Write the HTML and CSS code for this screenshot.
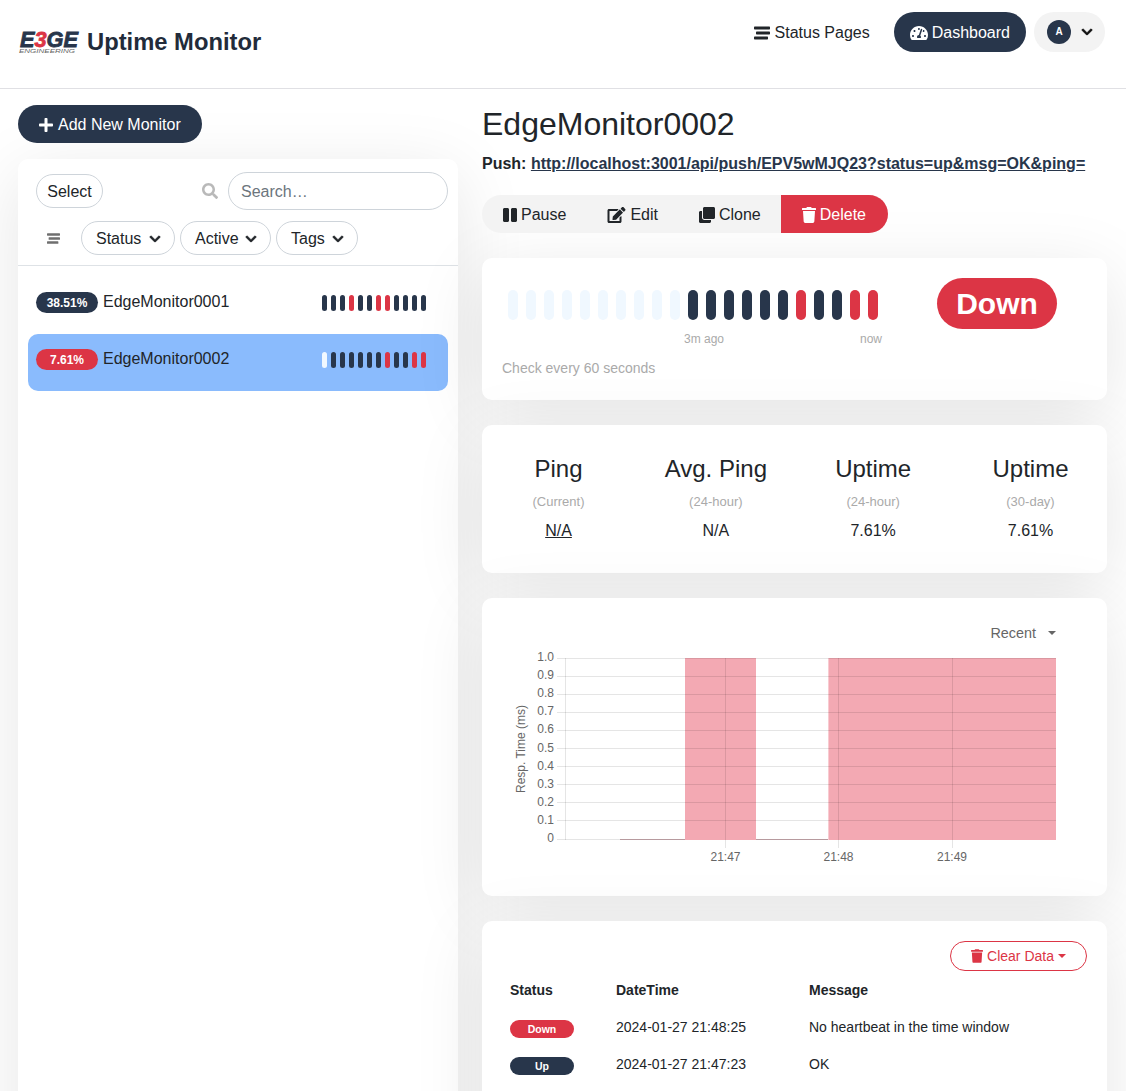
FILE: index.html
```html
<!DOCTYPE html>
<html>
  <head>
    <title>EdgeMonitor0002 - Uptime Monitor</title>
    <link rel="stylesheet" href="styles.css">
  </head>
  <body>
    <svg class="icon-defs">
      <symbol id="i-plus" viewBox="0 0 448 512"><path d="M416 208H272V64c0-17.67-14.33-32-32-32h-32c-17.67 0-32 14.33-32 32v144H32c-17.67 0-32 14.33-32 32v32c0 17.67 14.33 32 32 32h144v144c0 17.67 14.33 32 32 32h32c17.67 0 32-14.33 32-32V304h144c17.67 0 32-14.33 32-32v-32c0-17.67-14.33-32-32-32z"/></symbol>
      <symbol id="i-stream" viewBox="0 0 512 512"><rect x="0" y="48" width="512" height="96" rx="22"/><rect x="64" y="208" width="448" height="96" rx="22"/><rect x="0" y="368" width="448" height="96" rx="22"/></symbol>
      <symbol id="i-gauge" viewBox="0 0 576 512"><path d="M288 32C128.94 32 0 160.94 0 320c0 52.8 14.25 102.26 39.06 144.8 5.61 9.62 16.3 15.2 27.44 15.2h443c11.14 0 21.83-5.58 27.44-15.2C561.75 422.26 576 372.8 576 320c0-159.06-128.94-288-288-288zm0 64c14.71 0 26.58 10.13 30.32 23.65-1.11 2.26-2.64 4.23-3.45 6.67l-9.22 27.67c-5.13 3.49-10.97 6.01-17.64 6.01-17.67 0-32-14.33-32-32S270.33 96 288 96zM96 384c-17.67 0-32-14.33-32-32s14.33-32 32-32 32 14.33 32 32-14.33 32-32 32zm48-160c-17.67 0-32-14.33-32-32s14.33-32 32-32 32 14.33 32 32-14.33 32-32 32zm246.77-72.41l-61.33 184C343.13 347.33 352 364.54 352 384c0 11.72-3.38 22.55-8.88 32H232.88c-5.5-9.45-8.88-20.28-8.88-32 0-33.94 26.5-61.43 59.9-63.59l61.34-184.01c4.17-12.56 17.73-19.45 30.36-15.17 12.57 4.19 19.35 17.79 15.17 30.36zm14.66 57.2l15.52-46.55c3.47-1.29 7.13-2.23 11.05-2.23 17.67 0 32 14.33 32 32s-14.33 32-32 32c-11.38-.01-20.89-6.27-26.57-15.22zM480 384c-17.67 0-32-14.33-32-32s14.33-32 32-32 32 14.33 32 32-14.33 32-32 32z"/></symbol>
      <symbol id="i-chevron" viewBox="-20 0 488 512"><path d="M207.029 381.476L12.686 187.132c-9.373-9.373-9.373-24.569 0-33.941l22.667-22.667c9.357-9.357 24.522-9.375 33.901-.04L224 284.505l154.745-154.021c9.379-9.335 24.544-9.317 33.901.04l22.667 22.667c9.373 9.373 9.373 24.569 0 33.941L240.971 381.476c-9.373 9.372-24.569 9.372-33.942 0z"/></symbol>
      <symbol id="i-search" viewBox="0 0 512 512"><path d="M505 442.7L405.3 343c-4.5-4.5-10.6-7-17-7H372c27.6-35.3 44-79.7 44-128C416 93.1 322.9 0 208 0S0 93.1 0 208s93.1 208 208 208c48.3 0 92.7-16.4 128-44v16.3c0 6.4 2.5 12.5 7 17l99.7 99.7c9.4 9.4 24.6 9.4 33.9 0l28.3-28.3c9.4-9.4 9.4-24.6.1-34zM208 336c-70.7 0-128-57.2-128-128 0-70.7 57.2-128 128-128 70.7 0 128 57.2 128 128 0 70.7-57.2 128-128 128z"/></symbol>
      <symbol id="i-pause" viewBox="0 0 448 512"><path d="M144 479H48c-26.5 0-48-21.5-48-48V79c0-26.5 21.5-48 48-48h96c26.5 0 48 21.5 48 48v352c0 26.5-21.5 48-48 48zm304-48V79c0-26.5-21.5-48-48-48h-96c-26.5 0-48 21.5-48 48v352c0 26.5 21.5 48 48 48h96c26.5 0 48-21.5 48-48z"/></symbol>
      <symbol id="i-edit" viewBox="0 0 576 512"><path d="M402.6 83.2l90.2 90.2c3.8 3.8 3.8 10 0 13.8L274.4 405.6l-92.8 10.3c-12.4 1.4-22.9-9.1-21.5-21.5l10.3-92.8L388.8 83.2c3.8-3.8 10-3.8 13.8 0zm162-22.9l-48.8-48.8c-15.2-15.2-39.9-15.2-55.2 0l-35.4 35.4c-3.8 3.8-3.8 10 0 13.8l90.2 90.2c3.8 3.8 10 3.8 13.8 0l35.4-35.4c15.2-15.3 15.2-40 0-55.2zM384 346.2V448H64V128h229.8c3.2 0 6.2-1.3 8.5-3.5l40-40c7.6-7.6 2.2-20.5-8.5-20.5H48C21.5 64 0 85.5 0 112v352c0 26.5 21.5 48 48 48h352c26.5 0 48-21.5 48-48V306.2c0-10.7-12.9-16-20.5-8.5l-40 40c-2.2 2.3-3.5 5.3-3.5 8.5z"/></symbol>
      <symbol id="i-clone" viewBox="0 0 512 512"><path d="M464 0c26.51 0 48 21.49 48 48v288c0 26.51-21.49 48-48 48H176c-26.51 0-48-21.49-48-48V48c0-26.51 21.49-48 48-48h288M176 416c-44.112 0-80-35.888-80-80V128H48c-26.51 0-48 21.49-48 48v288c0 26.51 21.49 48 48 48h288c26.51 0 48-21.49 48-48v-48H176z"/></symbol>
      <symbol id="i-trash" viewBox="0 0 448 512"><path d="M432 32H312l-9.4-18.7A24 24 0 0 0 281.1 0H166.8a23.72 23.72 0 0 0-21.4 13.3L136 32H16A16 16 0 0 0 0 48v32a16 16 0 0 0 16 16h416a16 16 0 0 0 16-16V48a16 16 0 0 0-16-16zM53.2 467a48 48 0 0 0 47.9 45h245.8a48 48 0 0 0 47.9-45L416 128H32z"/></symbol>
    </svg>

    <div class="page">
      <header class="topbar">
        <div class="brand">
          <svg class="logo" viewBox="0 0 60 24">
            <text class="logo-word" x="1" y="17" textLength="58" lengthAdjust="spacingAndGlyphs">E<tspan class="logo-three">3</tspan>GE</text>
            <text class="logo-sub" x="0" y="23" textLength="56" lengthAdjust="spacingAndGlyphs">ENGINEERING</text>
          </svg>
          <span class="brand-name">Uptime Monitor</span>
        </div>
        <nav class="nav">
          <a class="nav-link"><svg class="icon i16"><use href="#i-stream"/></svg>Status Pages</a>
          <a class="nav-link active"><svg class="icon i18"><use href="#i-gauge"/></svg>Dashboard</a>
          <div class="profile">
            <span class="avatar">A</span>
            <svg class="icon i12 chevron"><use href="#i-chevron"/></svg>
          </div>
        </nav>
      </header>

      <main class="layout">
        <aside class="sidebar">
          <a class="add-btn"><svg class="icon i14"><use href="#i-plus"/></svg>Add New Monitor</a>
          <section class="card list-card">
            <div class="list-head">
              <div class="head-row">
                <button class="pill-btn select-btn">Select</button>
                <svg class="icon i16 search-icon"><use href="#i-search"/></svg>
                <input class="search" placeholder="Search…">
              </div>
              <div class="filter-row">
                <span class="filter-icon"><svg class="icon i13"><use href="#i-stream"/></svg></span>
                <button class="pill-btn filter f-status">Status<svg class="icon i12 chevron"><use href="#i-chevron"/></svg></button>
                <button class="pill-btn filter f-active">Active<svg class="icon i12 chevron"><use href="#i-chevron"/></svg></button>
                <button class="pill-btn filter f-tags">Tags<svg class="icon i12 chevron"><use href="#i-chevron"/></svg></button>
              </div>
            </div>
            <div class="list">
              <div class="item">
                <span class="uptime navy">38.51%</span>
                <span class="item-name">EdgeMonitor0001</span>
                <div class="mini-beats">
                  <i class="navy"></i><i class="navy"></i><i class="navy"></i><i class="red"></i><i class="navy"></i><i class="navy"></i><i class="red"></i><i class="red"></i><i class="navy"></i><i class="navy"></i><i class="navy"></i><i class="navy"></i>
                </div>
              </div>
              <div class="item selected">
                <span class="uptime red">7.61%</span>
                <span class="item-name">EdgeMonitor0002</span>
                <div class="mini-beats">
                  <i class="empty"></i><i class="navy"></i><i class="navy"></i><i class="navy"></i><i class="navy"></i><i class="navy"></i><i class="navy"></i><i class="red"></i><i class="navy"></i><i class="navy"></i><i class="red"></i><i class="red"></i>
                </div>
              </div>
            </div>
          </section>
        </aside>

        <div class="detail">
          <h1 class="title">EdgeMonitor0002</h1>
          <p class="push">Push: <a>http://localhost:3001/api/push/EPV5wMJQ23?status=up&amp;msg=OK&amp;ping=</a></p>

          <div class="actions">
            <a class="action"><svg class="icon i14"><use href="#i-pause"/></svg>Pause</a>
            <a class="action"><svg class="icon i19"><use href="#i-edit"/></svg>Edit</a>
            <a class="action"><svg class="icon i16"><use href="#i-clone"/></svg>Clone</a>
            <a class="action danger"><svg class="icon i14"><use href="#i-trash"/></svg>Delete</a>
          </div>

          <section class="card status-card">
            <div class="beat-col">
              <div class="beats">
                <i class="empty"></i><i class="empty"></i><i class="empty"></i><i class="empty"></i><i class="empty"></i><i class="empty"></i><i class="empty"></i><i class="empty"></i><i class="empty"></i><i class="empty"></i>
                <i class="navy"></i><i class="navy"></i><i class="navy"></i><i class="navy"></i><i class="navy"></i><i class="navy"></i><i class="red"></i><i class="navy"></i><i class="navy"></i><i class="red"></i><i class="red"></i>
              </div>
              <div class="beat-labels"><span>3m ago</span><span>now</span></div>
              <div class="check-text">Check every 60 seconds</div>
            </div>
            <div class="big-status">Down</div>
          </section>

          <section class="card stats-card">
            <div class="stat"><h4>Ping</h4><div class="stat-sub">(Current)</div><div class="stat-val"><u>N/A</u></div></div>
            <div class="stat"><h4>Avg. Ping</h4><div class="stat-sub">(24-hour)</div><div class="stat-val">N/A</div></div>
            <div class="stat"><h4>Uptime</h4><div class="stat-sub">(24-hour)</div><div class="stat-val">7.61%</div></div>
            <div class="stat"><h4>Uptime</h4><div class="stat-sub">(30-day)</div><div class="stat-val">7.61%</div></div>
          </section>

          <section class="card chart-card">
            <div class="range">Recent<span class="caret"></span></div>
            <svg class="chart" viewBox="482 648 625 220">
              <path class="down-area" d="M685 658H756V840H685ZM828.4 658H1056V840H828.4Z"/>
              <path class="down-line" d="M620 839.5H685M756 839.5H828"/>
              <g class="grid">
                <path d="M557 658.5H1056M557 676.5H1056M557 694.5H1056M557 712.5H1056M557 730.5H1056M557 748.5H1056M557 766.5H1056M557 784.5H1056M557 802.5H1056M557 820.5H1056M557 839.5H620"/>
                <path d="M565.5 658V840M725.5 658V848M838.5 658V848M952.5 658V848"/>
              </g>
              <g class="y-labels">
                <text x="554" y="661">1.0</text><text x="554" y="679">0.9</text><text x="554" y="697">0.8</text><text x="554" y="715">0.7</text><text x="554" y="733">0.6</text><text x="554" y="752">0.5</text><text x="554" y="770">0.4</text><text x="554" y="788">0.3</text><text x="554" y="806">0.2</text><text x="554" y="824">0.1</text><text x="554" y="842">0</text>
              </g>
              <g class="x-labels">
                <text x="725.5" y="861">21:47</text><text x="838.5" y="861">21:48</text><text x="952" y="861">21:49</text>
              </g>
              <text class="y-title" transform="translate(525 749) rotate(-90)">Resp. Time (ms)</text>
            </svg>
          </section>

          <section class="card table-card">
            <div class="table-tools">
              <button class="clear-btn"><svg class="icon i12-14"><use href="#i-trash"/></svg>Clear Data<span class="caret"></span></button>
            </div>
            <table class="events">
              <thead>
                <tr><th class="col-status">Status</th><th class="col-time">DateTime</th><th>Message</th></tr>
              </thead>
              <tbody>
                <tr><td><span class="state red">Down</span></td><td>2024-01-27 21:48:25</td><td>No heartbeat in the time window</td></tr>
                <tr><td><span class="state navy">Up</span></td><td>2024-01-27 21:47:23</td><td>OK</td></tr>
              </tbody>
            </table>
          </section>
        </div>
      </main>
    </div>
  </body>
</html>
```

FILE: styles.css
```css
* {
  box-sizing: border-box;
}

html, body {
  margin: 0;
  padding: 0;
  background-color: #fff;
}

body {
  font-family: "Liberation Sans", Arial, sans-serif;
  font-size: 16px;
  line-height: 24px;
  color: #212529;
}

.icon-defs {
  display: none;
}

.page {
  height: 1091px;
  overflow: hidden;
}

.icon {
  fill: currentColor;
  flex-shrink: 0;
  display: block;
}

.chevron {
  stroke: currentColor;
  stroke-width: 28;
}

.i12 { width: 12px; height: 12px; }
.i13 { width: 13px; height: 13px; }
.i14 { width: 14px; height: 16px; }
.i16 { width: 16px; height: 16px; }
.i18 { width: 18px; height: 16px; }
.i19 { width: 19px; height: 16px; }
.i12-14 { width: 12px; height: 14px; }

.navy { background-color: #28364b; }
.red { background-color: #dc3545; }
.empty { background-color: #f0f8ff; }

/* top bar */
.topbar {
  height: 89px;
  border-bottom: 1px solid #e0e0e4;
  display: flex;
  justify-content: space-between;
  padding: 12px 21px 0 19px;
}

.brand {
  display: flex;
  align-items: center;
  height: 60px;
}

.logo {
  display: block;
  width: 60px;
  height: 24px;
  margin-right: 8px;
  overflow: visible;
}

.logo-word {
  font-size: 22px;
  font-weight: bold;
  font-style: italic;
  fill: #28364b;
  stroke: #28364b;
  stroke-width: 0.8;
}

.logo-three {
  fill: #dc3545;
  stroke: #dc3545;
}

.logo-sub {
  font-size: 5.5px;
  font-style: italic;
  fill: #666;
}

.brand-name {
  font-size: 23.75px;
  font-weight: bold;
  color: #222b3a;
}

.nav {
  display: flex;
  align-items: flex-start;
}

.nav-link {
  display: flex;
  align-items: center;
  gap: 5px;
  height: 40px;
  padding-top: 1px;
  border-radius: 20px;
  color: #212529;
}

.nav-link.active {
  gap: 4px;
  margin-left: 24px;
  padding: 1px 16px 0;
  color: #fff;
  background-color: #28364b;
}

.profile {
  display: flex;
  align-items: center;
  gap: 10px;
  width: 71px;
  height: 40px;
  margin-left: 8px;
  padding-left: 13px;
  border-radius: 20px;
  background-color: #f3f3f3;
  color: #111;
}

.avatar {
  width: 24px;
  height: 24px;
  border-radius: 50%;
  background-color: #28364b;
  color: #fff;
  font-size: 10px;
  font-weight: bold;
  line-height: 24px;
  text-align: center;
}

/* columns */
.layout {
  display: flex;
  padding: 16px 19px 0 18px;
  gap: 24px;
}

.sidebar {
  width: 440px;
  flex-shrink: 0;
}

.detail {
  flex: 1;
  min-width: 0;
}

.card {
  background-color: #fff;
  border-radius: 10px;
  box-shadow: 0 15px 70px rgba(0, 0, 0, 0.1);
}

.add-btn {
  display: inline-flex;
  align-items: center;
  gap: 5px;
  height: 38px;
  padding: 1px 21px 0;
  border-radius: 19px;
  background-color: #28364b;
  color: #fff;
}

/* monitor list */
.list-card {
  margin-top: 16px;
  height: 1000px;
}

.list-head {
  padding-top: 13px;
  padding-bottom: 10px;
  border-bottom: 1px solid #dee2e6;
}

.head-row {
  display: flex;
  align-items: center;
  padding: 0 10px 0 18px;
}

.pill-btn {
  height: 34px;
  padding: 2px 11px 0;
  font: inherit;
  color: #212529;
  background-color: #fff;
  border: 1px solid #ced4da;
  border-radius: 17px;
}

.select-btn {
  width: 67px;
  padding-left: 0;
  padding-right: 0;
}

.search-icon {
  margin-left: auto;
  margin-right: 10px;
  color: #b9b9b9;
}

.search {
  width: 220px;
  height: 38px;
  padding: 2px 12px 0;
  font: inherit;
  border: 1px solid #ced4da;
  border-radius: 19px;
  outline: none;
}

.search::placeholder {
  color: #6c757d;
}

.filter-row {
  display: flex;
  align-items: center;
  gap: 5px;
  margin-top: 11px;
  padding-left: 18px;
}

.filter-icon {
  width: 40px;
  padding-left: 11px;
  color: #6f6f6f;
}

.filter {
  display: flex;
  align-items: center;
  justify-content: space-between;
  padding: 2px 13px 0 14px;
}

.f-status { width: 94px; }
.f-active { width: 91px; }
.f-tags { width: 82px; }

.list {
  padding: 11px 10px;
}

.item {
  display: flex;
  align-items: center;
  height: 57px;
  padding: 0 22px 6px 8px;
  border-radius: 10px;
}

.item.selected {
  background-color: #8abbfd;
}

.uptime {
  width: 62px;
  height: 21px;
  margin-right: 5px;
  border-radius: 11px;
  color: #fff;
  font-size: 12px;
  font-weight: bold;
  line-height: 22px;
  text-align: center;
}

.item-name {
  margin-bottom: 2px;
}

.mini-beats {
  display: flex;
  gap: 4px;
  margin-left: auto;
  margin-top: 1px;
}

.mini-beats i {
  width: 5px;
  height: 16px;
  border-radius: 2.5px;
}

/* detail head */
.title {
  margin: 0;
  font-size: 32px;
  font-weight: 400;
  line-height: 38px;
}

.push {
  margin: 9px 0 0;
  font-weight: bold;
  white-space: nowrap;
}

.push a {
  color: #28364b;
  text-decoration: underline;
}

.actions {
  display: inline-flex;
  height: 38px;
  margin-top: 19px;
  border-radius: 19px;
  background-color: #f3f3f3;
  overflow: hidden;
  vertical-align: top;
}

.action {
  display: flex;
  align-items: center;
  gap: 4px;
  padding: 1px 20px 0 21px;
  color: #212529;
}

.action.danger {
  padding-right: 22px;
  color: #fff;
  background-color: #dc3545;
}

/* heartbeat */
.status-card {
  display: flex;
  justify-content: space-between;
  align-items: flex-start;
  margin-top: 25px;
  padding: 20px 50px 22px 20px;
}

.beat-col {
  width: 380px;
  padding-top: 12px;
}

.beats {
  display: flex;
  gap: 8px;
  padding-left: 6px;
}

.beats i {
  width: 10px;
  height: 30px;
  border-radius: 5px;
}

.beat-labels {
  display: flex;
  justify-content: space-between;
  margin: 12px 0 0 182px;
  font-size: 12px;
  line-height: 14px;
  color: #aaa;
}

.check-text {
  margin-top: 12px;
  font-size: 14px;
  line-height: 20px;
  color: #aaa;
}

.big-status {
  width: 120px;
  height: 51px;
  border-radius: 26px;
  background-color: #dc3545;
  color: #fff;
  font-size: 30px;
  font-weight: bold;
  line-height: 51px;
  text-align: center;
}

/* stats */
.stats-card {
  display: grid;
  grid-template-columns: repeat(4, 157.33px);
  justify-content: center;
  margin-top: 25px;
  padding: 29px 0 30px;
}

.stat {
  text-align: center;
}

.stat h4 {
  margin: 0;
  font-size: 24px;
  font-weight: 400;
  line-height: 29px;
}

.stat-sub {
  margin-top: 11px;
  font-size: 13px;
  line-height: 16px;
  color: #aaa;
}

.stat-val {
  margin-top: 9px;
}

/* chart */
.chart-card {
  margin-top: 25px;
  padding: 25px 51px 28px 0;
}

.range {
  display: flex;
  justify-content: flex-end;
  align-items: center;
  gap: 12px;
  font-size: 14.4px;
  line-height: 20px;
  color: #666;
}

.caret {
  width: 0;
  height: 0;
  border-top: 4px solid currentColor;
  border-left: 4px solid transparent;
  border-right: 4px solid transparent;
}

.chart {
  display: block;
  width: 625px;
  height: 220px;
  margin-top: 5px;
  font-size: 12px;
  fill: #666;
}

.grid path {
  fill: none;
  stroke: rgba(0, 0, 0, 0.1);
  stroke-width: 1;
}

.down-area {
  fill: #f3a9b3;
}

.down-line {
  fill: none;
  stroke: #b79a9e;
  stroke-width: 1;
}

.y-labels text {
  text-anchor: end;
}

.x-labels text {
  text-anchor: middle;
}

.y-title {
  text-anchor: middle;
}

/* important events */
.table-card {
  margin-top: 25px;
  height: 400px;
  padding: 20px 20px 0;
  font-size: 14px;
}

.table-tools {
  display: flex;
  justify-content: flex-end;
}

.clear-btn {
  display: flex;
  align-items: center;
  justify-content: center;
  gap: 4px;
  width: 137px;
  height: 30px;
  padding: 0;
  font: inherit;
  color: #dc3545;
  background-color: #fff;
  border: 1px solid #dc3545;
  border-radius: 15px;
}

.events {
  width: 100%;
  margin-top: 0.5px;
  table-layout: fixed;
  border-collapse: collapse;
}

.events th, .events td {
  padding: 8px;
  line-height: 21px;
  text-align: left;
}

.col-status {
  width: 106px;
}

.col-time {
  width: 193px;
}

.state {
  display: block;
  width: 64px;
  height: 18px;
  margin: 2px 0 -2px;
  border-radius: 9px;
  color: #fff;
  font-size: 10.5px;
  font-weight: bold;
  line-height: 18px;
  text-align: center;
}
```
